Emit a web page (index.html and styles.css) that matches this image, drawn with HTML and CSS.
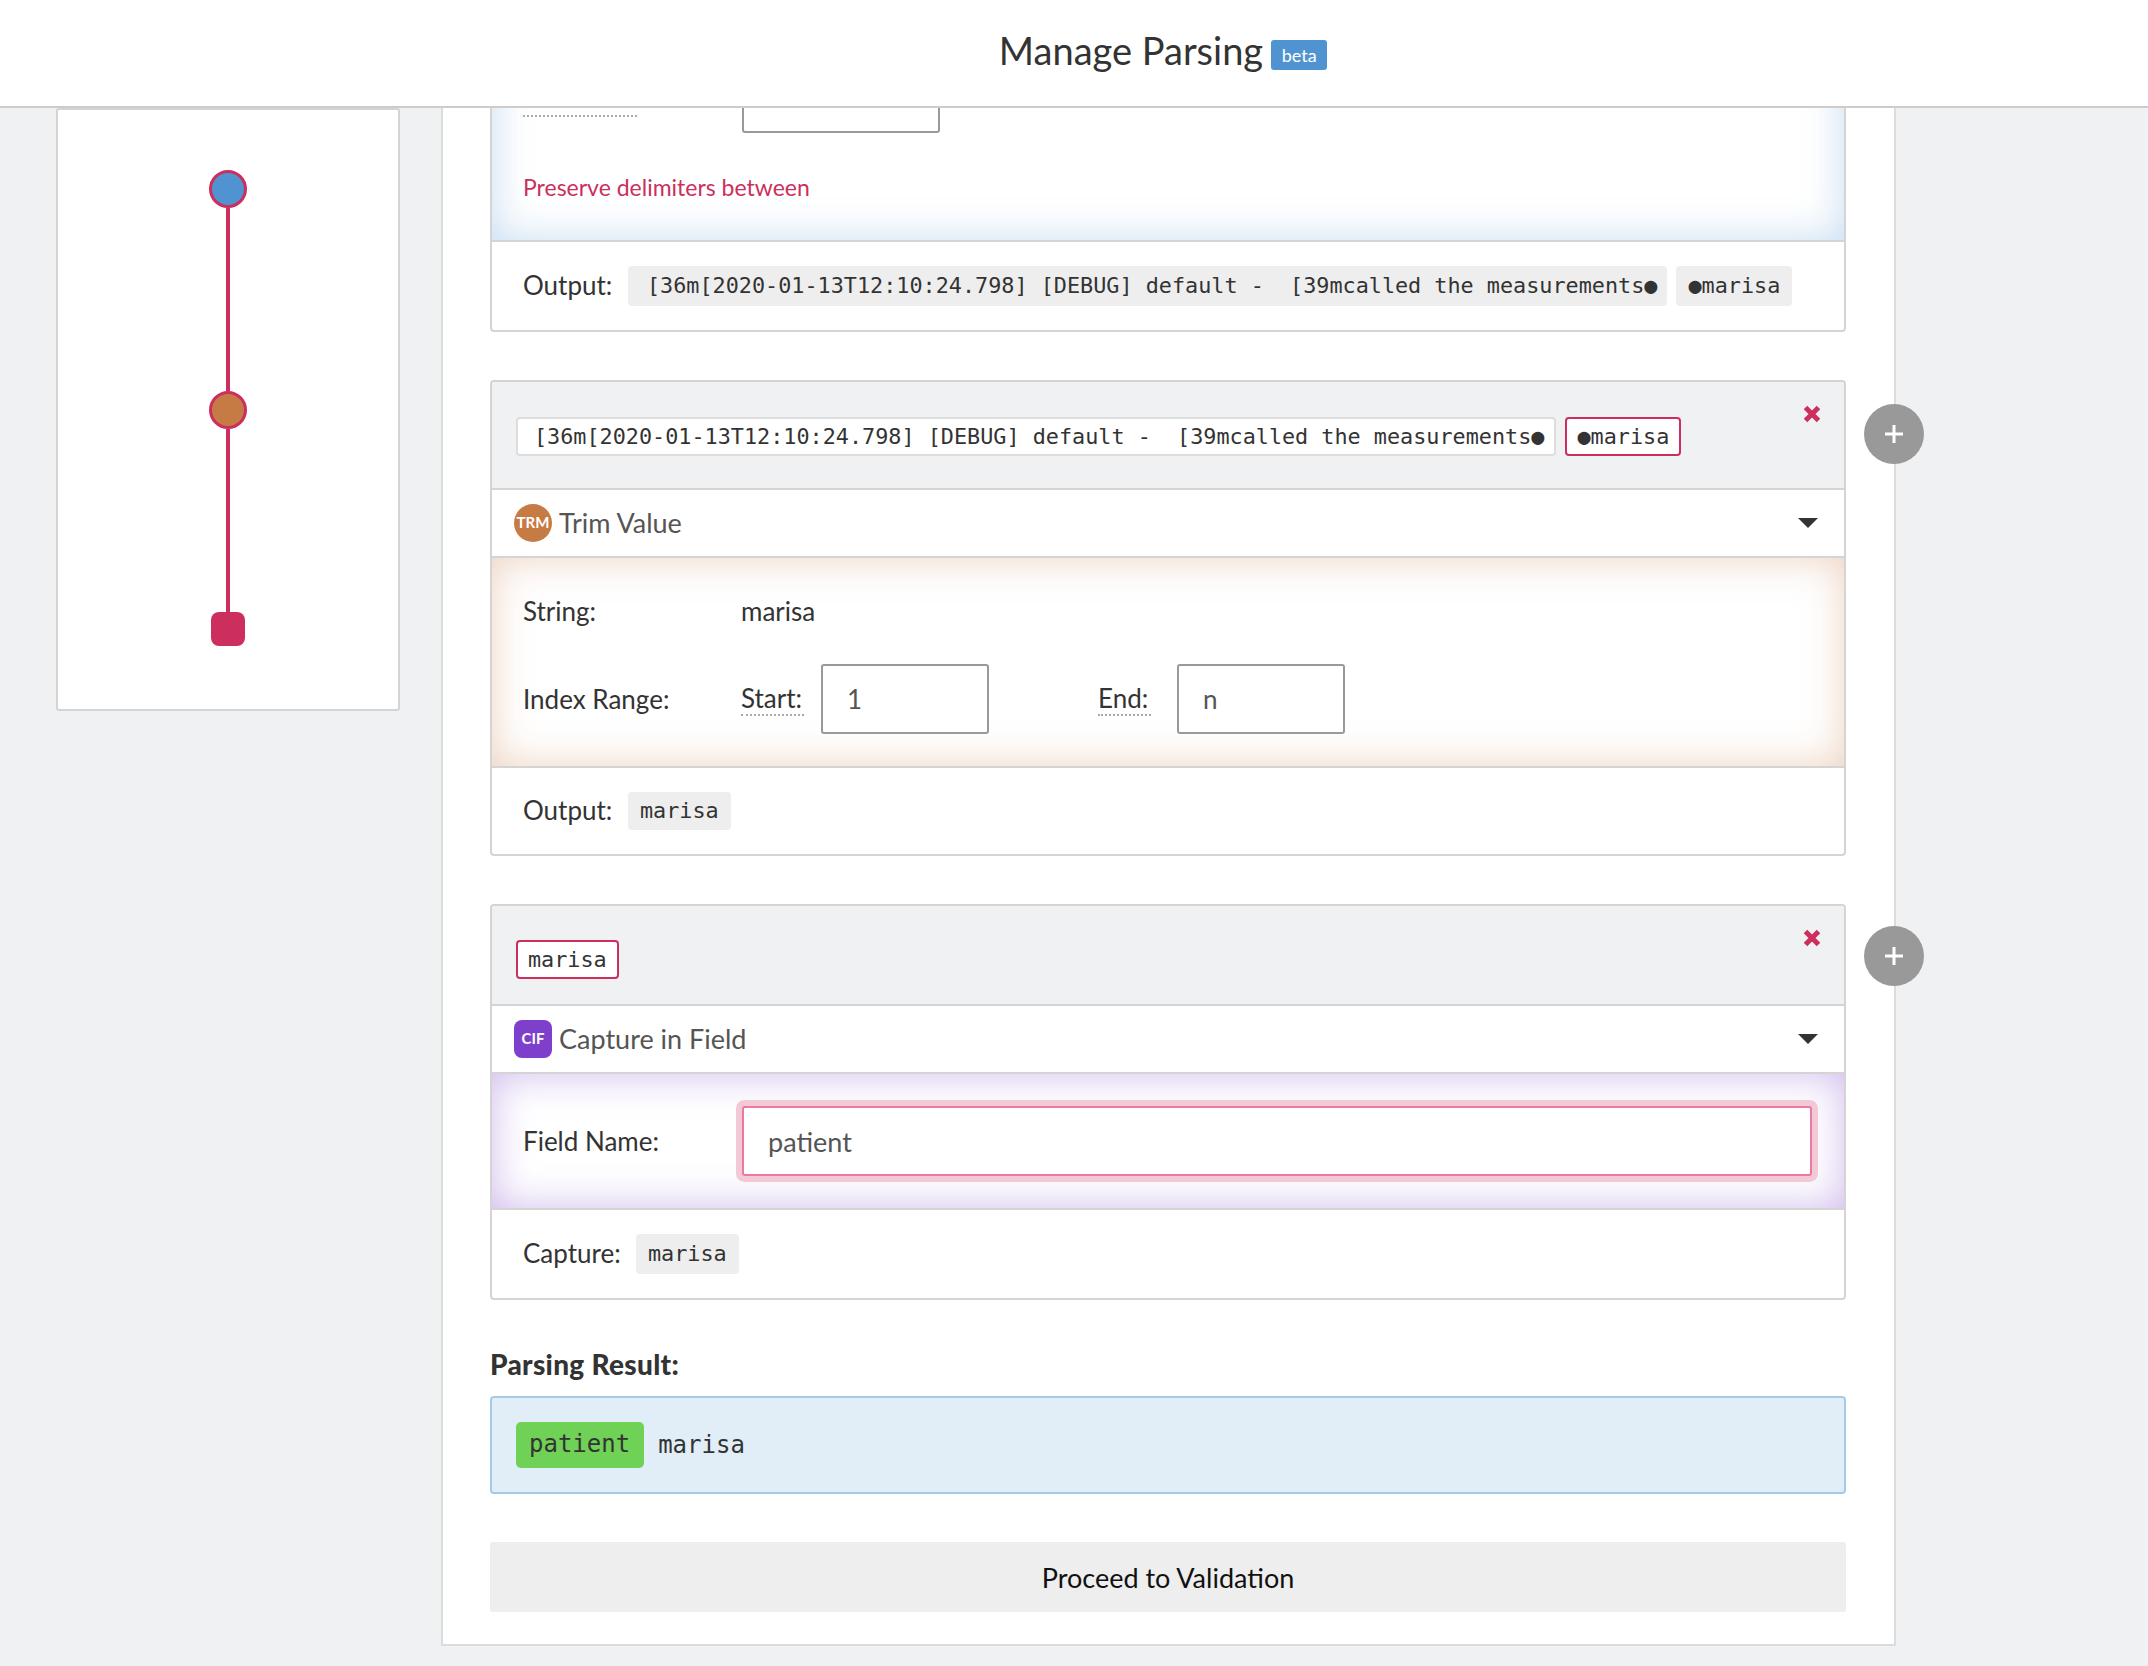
FILE: index.html
```html
<!DOCTYPE html>
<html lang="en">
  <head>
    <meta charset="UTF-8" />
    <meta name="viewport" content="width=device-width, initial-scale=1.0" />
    <title>Manage Parsing</title>
    <link rel="stylesheet" href="styles.css">
  </head>
  <body>
    <header class="topbar">
      <h1>Manage Parsing</h1>
      <span class="beta">beta</span>
    </header>

    <div class="layout">
      <aside class="flow">
        <div class="node node-blue"></div>
        <div class="link"></div>
        <div class="node node-orange"></div>
        <div class="link"></div>
        <div class="node-end"></div>
      </aside>

      <main class="panel">
        <section class="card">
          <div class="card-body body-blue">
            <div class="row row-clipped">
              <span class="label dotted">Delimiter:</span>
              <div class="input input-short">Stop at</div>
            </div>
            <div class="preserve">Preserve delimiters between</div>
          </div>
          <div class="card-foot">
            <span class="foot-label">Output:</span>
            <code class="chip chip-long">[36m[2020-01-13T12:10:24.798] [DEBUG] default -  [39mcalled the measurements●</code>
            <code class="chip">●marisa</code>
          </div>
        </section>

        <section class="card">
          <div class="card-head">
            <code class="token">[36m[2020-01-13T12:10:24.798] [DEBUG] default -  [39mcalled the measurements●</code>
            <code class="token token-on">●marisa</code>
            <svg class="close" viewBox="0 0 18 18"><path d="M2.5 2.5l13 13M15.5 2.5l-13 13" /></svg>
          </div>
          <div class="card-type">
            <span class="badge badge-trm">TRM</span>
            <span class="type-name">Trim Value</span>
            <span class="caret"></span>
          </div>
          <div class="card-body body-orange">
            <div class="row row-string">
              <span class="label">String:</span>
              <span>marisa</span>
            </div>
            <div class="row">
              <span class="label">Index Range:</span>
              <span class="dotted start-label">Start:</span>
              <div class="input input-index">1</div>
              <span class="dotted end-label">End:</span>
              <div class="input input-index">n</div>
            </div>
          </div>
          <div class="card-foot foot-short">
            <span class="foot-label">Output:</span>
            <code class="chip">marisa</code>
          </div>
          <button class="add"><svg viewBox="0 0 18 18"><path d="M9 0v18M0 9h18" /></svg></button>
        </section>

        <section class="card">
          <div class="card-head head-short">
            <code class="token token-on">marisa</code>
            <svg class="close" viewBox="0 0 18 18"><path d="M2.5 2.5l13 13M15.5 2.5l-13 13" /></svg>
          </div>
          <div class="card-type">
            <span class="badge badge-cif">CIF</span>
            <span class="type-name">Capture in Field</span>
            <span class="caret"></span>
          </div>
          <div class="card-body body-purple">
            <div class="row row-full">
              <span class="label">Field Name:</span>
              <div class="input input-focus">patient</div>
            </div>
          </div>
          <div class="card-foot">
            <span class="foot-label foot-label-wide">Capture:</span>
            <code class="chip">marisa</code>
          </div>
          <button class="add add-low"><svg viewBox="0 0 18 18"><path d="M9 0v18M0 9h18" /></svg></button>
        </section>

        <h2 class="result-title">Parsing Result:</h2>
        <div class="result">
          <code class="field-tag">patient</code>
          <code class="field-value">marisa</code>
        </div>

        <button class="proceed">Proceed to Validation</button>
      </main>
    </div>
  </body>
</html>
```

FILE: styles.css
```css
* {
  box-sizing: border-box;
}
html,
body {
  height: 1666px;
  margin: 0;
  overflow: hidden;
}
body {
  background: #f0f1f3;
  color: #333;
  font-family: "Lato", "Noto Sans", sans-serif;
  font-size: 26px;
}
code {
  font-family: "DejaVu Sans Mono", monospace;
  font-size: 21.8px;
  white-space: pre;
}

.topbar {
  position: relative;
  z-index: 2;
  display: flex;
  align-items: center;
  justify-content: center;
  gap: 8px;
  height: 108px;
  padding-left: 178px;
  background: #fff;
  border-bottom: 2px solid #ccc;
}
.topbar h1 {
  margin: 0 0 6px;
  font-size: 38px;
  font-weight: 400;
}
.beta {
  display: flex;
  align-items: center;
  justify-content: center;
  width: 56px;
  height: 30px;
  margin-top: 3px;
  background: #4f94d0;
  border-radius: 3px;
  color: #fff;
  font-size: 18px;
}

.layout {
  display: flex;
  align-items: flex-start;
  gap: 41px;
  height: 1558px;
  padding-left: 56px;
  overflow: hidden;
}

.flow {
  display: flex;
  flex-direction: column;
  align-items: center;
  width: 344px;
  height: 603px;
  padding-top: 60px;
  background: #fff;
  border: 2px solid #d4d4d5;
  border-radius: 3px;
}
.node {
  flex: none;
  width: 38px;
  height: 38px;
  border: 3px solid #cc2f5d;
  border-radius: 50%;
}
.node-blue {
  background: #4f94d0;
}
.node-orange {
  background: #c77b44;
}
.link {
  flex: none;
  width: 4px;
  height: 183px;
  background: #cc2f5d;
}
.node-end {
  flex: none;
  width: 34px;
  height: 34px;
  background: #cc2f5d;
  border-radius: 8px;
}

.panel {
  flex: none;
  width: 1455px;
  height: 1538px;
  padding: 0 48px 30px 47px;
  background: #fff;
  border: solid #dcdcdd;
  border-width: 0 2px 2px;
}

.card {
  position: relative;
  margin-bottom: 48px;
  border: 2px solid #d4d4d5;
  border-radius: 4px;
}
.panel .card:first-child {
  margin-top: -62px;
}

.card-head {
  display: flex;
  gap: 9px;
  height: 108px;
  padding: 35px 24px 0;
  background: #f0f1f3;
  border-bottom: 2px solid #d4d4d5;
  border-radius: 3px 3px 0 0;
}
.head-short {
  height: 100px;
  padding-top: 34px;
}
.token {
  height: 39px;
  padding: 0 10px;
  background: #fff;
  border: 2px solid #ddd;
  border-radius: 4px;
  line-height: 35px;
}
.token:first-child {
  padding: 0 10px 0 16px;
}
.token-on,
.token-on:first-child {
  padding: 0 10px;
  border-color: #cc2f5d;
}
.close {
  position: absolute;
  top: 23px;
  right: 23px;
  width: 18px;
  height: 18px;
}
.close path {
  fill: none;
  stroke: #cc2f5d;
  stroke-width: 5;
}

.card-type {
  display: flex;
  align-items: center;
  gap: 7px;
  height: 68px;
  padding: 0 26px 0 22px;
  color: #555;
  font-size: 27px;
  border-bottom: 2px solid #d4d4d5;
}
.type-name {
  margin-bottom: 2px;
}
.badge {
  display: flex;
  align-items: center;
  justify-content: center;
  flex: none;
  width: 38px;
  height: 38px;
  padding-bottom: 3px;
  color: #fff;
  font-size: 15px;
  font-weight: 700;
}
.badge-trm {
  background: #c77b44;
  border-radius: 50%;
}
.badge-cif {
  background: #7e3fcc;
  border-radius: 8px;
}
.caret {
  width: 0;
  height: 0;
  margin-left: auto;
  border-style: solid;
  border-width: 10px 10px 0;
  border-color: #333 transparent transparent;
}

.card-body {
  padding: 0 32px 0 31px;
  border-bottom: 2px solid #d4d4d5;
}
.body-blue {
  height: 194px;
  box-shadow: inset 0 0 40px rgba(79, 148, 208, 0.33);
}
.body-orange {
  height: 210px;
  padding-top: 28px;
  box-shadow: inset 0 0 40px rgba(199, 123, 68, 0.34);
}
.body-purple {
  display: flex;
  align-items: center;
  height: 136px;
  box-shadow: inset 0 0 40px rgba(126, 63, 204, 0.36);
}
.row {
  display: flex;
  align-items: center;
}
.row-full {
  width: 100%;
}
.row-string {
  height: 50px;
  margin-bottom: 28px;
}
.row-clipped {
  align-items: flex-end;
  height: 85px;
}
.label {
  flex: none;
  width: 218px;
}
.dotted {
  border-bottom: 2px dotted #aaa;
  white-space: nowrap;
}
/* first card is scrolled under the topbar, only the ends of its text show */
.row-clipped .label {
  width: 114px;
  height: 32px;
  margin-right: 105px;
  margin-bottom: 16px;
  line-height: 10px;
}
.input {
  display: flex;
  align-items: center;
  padding-left: 24px;
  background: #fff;
  border: 2px solid #999;
  border-radius: 3px;
  color: #555;
}
.input-short {
  width: 198px;
  height: 69px;
  padding-bottom: 16px;
}
.input-index {
  flex: none;
  width: 168px;
  height: 70px;
}
.start-label {
  flex: none;
  width: 63px;
  margin-right: 17px;
}
.end-label {
  flex: none;
  width: 53px;
  margin: 0 26px 0 109px;
}
.input-focus {
  flex: 1;
  height: 70px;
  margin-left: 1px;
  border-color: #ec7aa0;
  box-shadow: 0 0 0 6px #f3c9d6;
  font-size: 27px;
}
.preserve {
  margin-top: 40px;
  color: #cc2f5d;
  font-size: 23px;
}

.card-foot {
  display: flex;
  align-items: center;
  gap: 9px;
  height: 88px;
  padding: 0 32px 0 31px;
}
.foot-short {
  height: 86px;
}
.foot-label {
  flex: none;
  width: 96px;
  margin-bottom: 2px;
}
.foot-label-wide {
  width: 104px;
}
.chip {
  height: 40px;
  padding: 0 12px;
  background: #eee;
  border-radius: 4px;
  line-height: 40px;
}
.foot-short .chip {
  height: 38px;
  line-height: 38px;
}
.chip-long {
  padding: 0 10px 0 19px;
}

.add {
  position: absolute;
  top: 22px;
  right: -80px;
  width: 60px;
  height: 60px;
  padding: 21px;
  background: #999;
  border: 0;
  border-radius: 50%;
}
.add-low {
  top: 20px;
}
.add svg {
  display: block;
  width: 18px;
  height: 18px;
}
.add path {
  fill: none;
  stroke: #fff;
  stroke-width: 3;
}

.result-title {
  margin: 0 0 16px;
  font-size: 28px;
  font-weight: 900;
  line-height: 32px;
  letter-spacing: 0.3px;
}
.result {
  display: flex;
  align-items: center;
  gap: 14px;
  height: 98px;
  padding: 0 24px;
  background: #e1eef8;
  border: 2px solid #a6cbe8;
  border-radius: 4px;
}
.field-tag {
  height: 46px;
  padding: 0 14px 0 13px;
  background: #6fd155;
  border-radius: 5px;
  font-size: 24px;
  line-height: 44px;
}
.field-value {
  font-size: 24px;
}
.proceed {
  display: block;
  width: 100%;
  height: 70px;
  margin-top: 48px;
  background: #eee;
  border: 0;
  border-radius: 3px;
  color: #111;
  font-family: inherit;
  font-size: 27px;
}
```
